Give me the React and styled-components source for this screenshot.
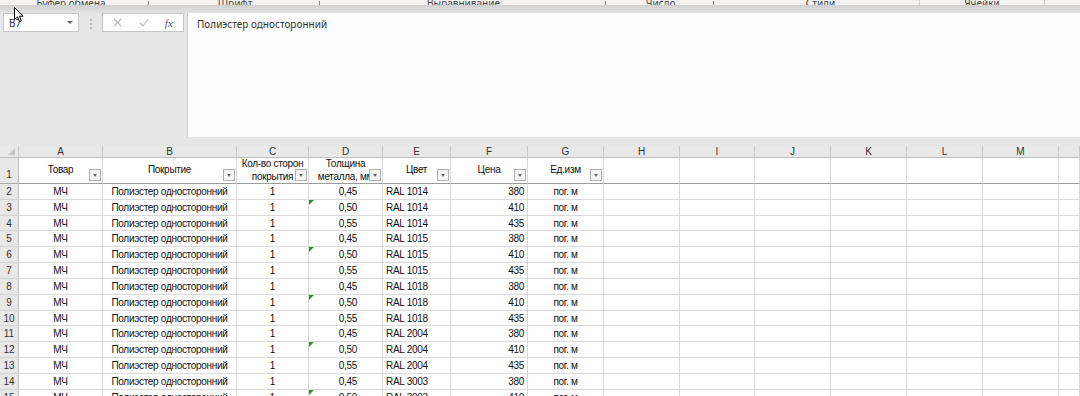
import React from 'react';
import styled, { createGlobalStyle } from 'styled-components';

const GlobalStyle = createGlobalStyle`
  html, body {
    margin: 0;
    padding: 0;
    background: #e6e6e6;
    overflow: hidden;
  }
  body {
    width: 1080px;
    height: 396px;
  }
`;

const Page = styled.div`
  position: relative;
  width: 1080px;
  height: 396px;
  overflow: hidden;
  background: #e6e6e6;
  font-family: "Liberation Sans", Arial, sans-serif;
`;

const Ribbon = styled.div`
  display: flex;
  height: 5px;
  overflow: hidden;
  background: #f3f2f1;
`;

const Group = styled.div`
  display: flex;
  align-items: flex-end;
  width: ${p => p.$w}px;
  flex: ${p => (p.$w ? 'none' : '1')};
  border-right: ${p => (p.$sep ? '1px solid #d2d0ce' : 'none')};
  box-sizing: border-box;
`;

const GroupLabel = styled.div`
  flex: 1;
  text-align: center;
  font: 10px "Noto Sans", "Open Sans", sans-serif;
  line-height: 14px;
  color: #444;
  margin-bottom: -5px;
`;

const Launcher = styled.div`
  width: 6px;
  height: 10px;
  margin: 0 8px -7px 0;
  border-right: 1px solid #888;
  border-bottom: 1px solid #888;
`;

const Shade = styled.div`
  height: 8px;
  background: linear-gradient(#d0d0d0, #e3e3e3);
`;

const FormulaRow = styled.div`
  display: flex;
  height: 124px;
`;

const FormulaTools = styled.div`
  display: flex;
  align-items: flex-start;
  width: 187px;
  padding-left: 3px;
  box-sizing: border-box;
`;

const NameBox = styled.div`
  display: flex;
  align-items: center;
  justify-content: space-between;
  width: 76px;
  height: 19px;
  box-sizing: border-box;
  border: 1px solid #c6c6c6;
  background: #fff;
  padding: 0 5px;
  font: 10px "Noto Sans", "Open Sans", sans-serif;
  color: #333;
`;

const Caret = styled.span`
  width: 0;
  height: 0;
  border-left: 3px solid transparent;
  border-right: 3px solid transparent;
  border-top: 3px solid #666;
`;

const Dots = styled.div`
  display: flex;
  flex-direction: column;
  gap: 2px;
  width: 23px;
  align-items: center;
  padding-top: 6px;
  span {
    width: 2px;
    height: 2px;
    background: #b4b4b4;
  }
`;

const EditBox = styled.div`
  display: flex;
  align-items: center;
  justify-content: space-around;
  width: 82px;
  height: 19px;
  box-sizing: border-box;
  border: 1px solid #c6c6c6;
  background: #fff;
  padding: 0 2px;
`;

const Fx = styled.span`
  font: italic 11px "Liberation Serif", serif;
  color: #555;
`;

const FormulaBox = styled.div`
  flex: 1;
  background: #fdfdfd;
  border-left: 1px solid #cfcfcf;
  padding: 3px 9px;
  font: 10px "Noto Sans", "Open Sans", sans-serif;
  line-height: 16px;
  color: #333;
`;

const Gap = styled.div`
  height: 9px;
`;

const Sheet = styled.div`
  display: grid;
  grid-template-columns: 19px 84px 134px 72px 74px 68px 77px 76px 76px 75px 76px 76px 76px 76px 1fr;
  grid-template-rows: 12px 26px;
  grid-auto-rows: 15.84px;
  background: #fff;
  font-size: 10px;
  letter-spacing: -0.3px;
`;

const ColHead = styled.div`
  position: relative;
  box-sizing: border-box;
  background: #e8e8e8;
  border-right: 1px solid #c8c8c8;
  border-bottom: 1px solid #bdbdbd;
  line-height: 12px;
  text-align: center;
  color: #333;
  letter-spacing: 0;
`;

const Corner = styled(ColHead)`
  &::after {
    content: '';
    position: absolute;
    right: 3px;
    bottom: 2px;
    width: 0;
    height: 0;
    border-left: 7px solid transparent;
    border-bottom: 7px solid #c4c4c4;
  }
`;

const RowNum = styled.div`
  box-sizing: border-box;
  background: #e8e8e8;
  border-right: 1px solid #bdbdbd;
  border-bottom: 1px solid ${p => (p.$frozen ? '#a8a8a8' : '#d2d2d2')};
  line-height: ${p => (p.$tall ? '34px' : '15px')};
  text-align: center;
  color: #333;
  letter-spacing: 0;
  overflow: hidden;
`;

const Cell = styled.div`
  position: relative;
  box-sizing: border-box;
  border-right: 1px solid #d8d8d8;
  border-bottom: 1px solid #dadada;
  line-height: 15px;
  padding: 0 ${p => p.$pr || 3}px 0 3px;
  white-space: nowrap;
  overflow: hidden;
  color: #111;
  text-align: ${p => p.$align || 'left'};
`;

const HeadCell = styled(Cell)`
  display: flex;
  flex-direction: column;
  justify-content: center;
  padding: 0 2px 2px;
  line-height: 13px;
  text-align: center;
  border-bottom: 1px solid #9c9c9c;
`;

const FilterBtn = styled.span`
  position: absolute;
  right: 1px;
  bottom: 2px;
  width: 12px;
  height: 12px;
  box-sizing: border-box;
  border: 1px solid #b0b0b0;
  background: #f4f4f4;
  &::after {
    content: '';
    position: absolute;
    left: 3px;
    top: 4px;
    border-left: 2.5px solid transparent;
    border-right: 2.5px solid transparent;
    border-top: 3px solid #666;
  }
`;

const Flag = styled.span`
  position: absolute;
  left: 0;
  top: 0;
  border-top: 5px solid #2e8b2e;
  border-right: 5px solid transparent;
`;

const Cursor = styled.svg`
  position: absolute;
  left: 14px;
  top: 7px;
`;

const ribbonGroups = [
  { label: 'Буфер обмена', w: 157, launcher: true },
  { label: 'Шрифт', w: 171, launcher: true },
  { label: 'Выравнивание', w: 286, launcher: true },
  { label: 'Число', w: 108, launcher: true },
  { label: 'Стили', w: 198, sep: true },
  { label: 'Ячейки', w: 125, sep: true },
  { label: '', w: 0 },
];

const letters = ['A', 'B', 'C', 'D', 'E', 'F', 'G', 'H', 'I', 'J', 'K', 'L', 'M', ''];

const headers = [
  ['Товар'],
  ['Покрытие'],
  ['Кол-во сторон', 'покрытия'],
  ['Толщина', 'металла, мм'],
  ['Цвет'],
  ['Цена'],
  ['Ед.изм'],
];

const colors = ['RAL 1014', 'RAL 1015', 'RAL 1018', 'RAL 2004', 'RAL 3003'];
const sizes = [
  ['0,45', 380],
  ['0,50', 410],
  ['0,55', 435],
];

const rows = Array.from({ length: 14 }, (_, i) => ({
  n: i + 2,
  thick: sizes[i % 3][0],
  price: sizes[i % 3][1],
  color: colors[Math.floor(i / 3)],
  flag: i % 3 === 1,
}));

const App = () => (
  <Page>
    <GlobalStyle />
    <Ribbon>
      {ribbonGroups.map((g, i) => (
        <Group key={i} $w={g.w} $sep={g.sep}>
          <GroupLabel>{g.label}</GroupLabel>
          {g.launcher && <Launcher />}
        </Group>
      ))}
    </Ribbon>
    <Shade />
    <FormulaRow>
      <FormulaTools>
        <NameBox>
          B7
          <Caret />
        </NameBox>
        <Dots>
          <span />
          <span />
          <span />
        </Dots>
        <EditBox>
          <svg width="9" height="9" viewBox="0 0 9 9">
            <path d="M1 1L8 8M8 1L1 8" stroke="#b8b8b8" strokeWidth="1.1" fill="none" />
          </svg>
          <svg width="10" height="9" viewBox="0 0 10 9">
            <path d="M1 5L3.8 8L9 1" stroke="#b8b8b8" strokeWidth="1.1" fill="none" />
          </svg>
          <Fx>fx</Fx>
        </EditBox>
      </FormulaTools>
      <FormulaBox>Полиэстер односторонний</FormulaBox>
    </FormulaRow>
    <Gap />
    <Sheet>
      <Corner />
      {letters.map((l, i) => (
        <ColHead key={i}>{l}</ColHead>
      ))}

      <RowNum $tall $frozen>1</RowNum>
      {headers.map((h, i) => (
        <HeadCell key={i}>
          {h.map(line => (
            <div key={line}>{line}</div>
          ))}
          <FilterBtn />
        </HeadCell>
      ))}
      {letters.slice(7).map((_, i) => (
        <HeadCell key={'e' + i} />
      ))}

      {rows.map(r => (
        <React.Fragment key={r.n}>
          <RowNum>{r.n}</RowNum>
          <Cell $align="center">МЧ</Cell>
          <Cell $align="center">Полиэстер односторонний</Cell>
          <Cell $align="center">1</Cell>
          <Cell $align="right" $pr={25}>
            {r.flag && <Flag />}
            {r.thick}
          </Cell>
          <Cell>{r.color}</Cell>
          <Cell $align="right">{r.price}</Cell>
          <Cell $align="center">пог. м</Cell>
          {letters.slice(7).map((_, i) => (
            <Cell key={i} />
          ))}
        </React.Fragment>
      ))}
    </Sheet>
    <Cursor width="10" height="16" viewBox="0 0 10 16">
      <path d="M0.5 0.5L0.5 12.5L3.5 9.8L5.6 14.6L7.4 13.8L5.4 9.2L9.2 9.2Z" fill="#fff" stroke="#000" strokeWidth="1" />
    </Cursor>
  </Page>
);

export default App;
